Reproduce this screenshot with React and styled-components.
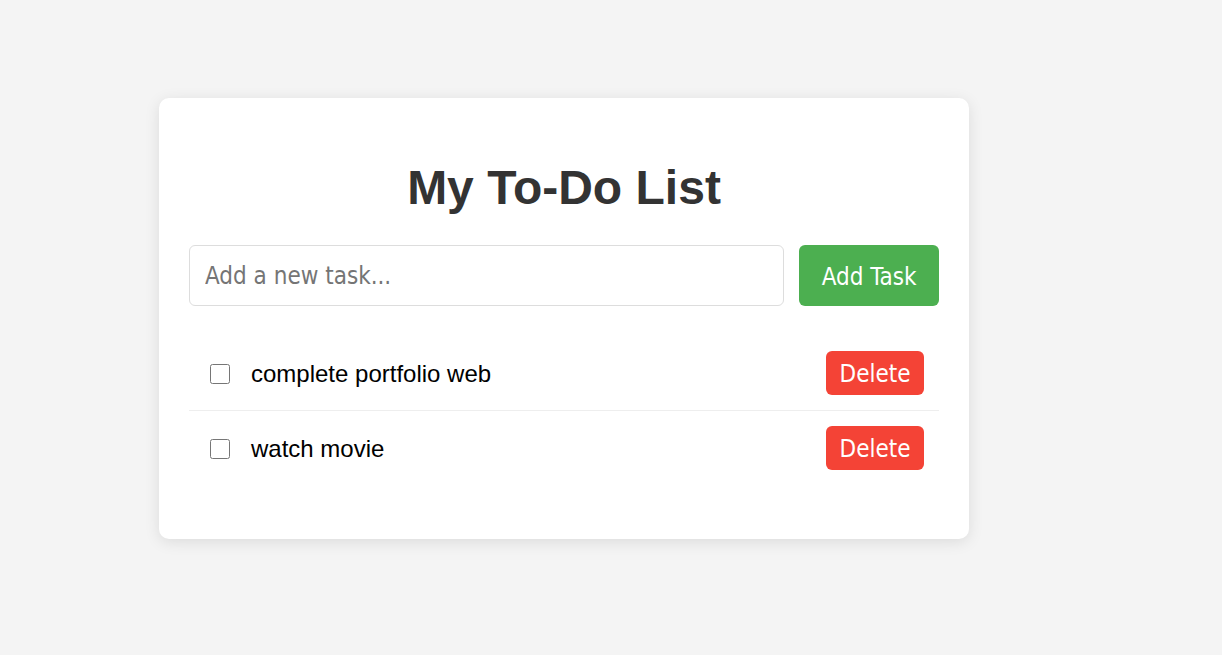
import React, { useState } from "react";
import styled, { createGlobalStyle } from "styled-components";

const Global = createGlobalStyle`
  html, body { margin: 0; padding: 0; background: #f4f4f4; }
  body { font-family: "Liberation Sans", Arial, sans-serif; }
`;

const Page = styled.div`
  padding: 98px 0 0 159px;
  min-height: 655px;
  box-sizing: border-box;
`;

const Card = styled.div`
  width: 810px;
  box-sizing: border-box;
  background: #fff;
  padding: 30px;
  border-radius: 10px;
  box-shadow: 0 3px 15px rgba(0, 0, 0, 0.1);
`;

const Title = styled.h1`
  margin: 32px 0 30px;
  text-align: center;
  color: #333;
  font-family: "Liberation Sans", Arial, sans-serif;
  font-size: 48px;
  font-weight: 700;
  line-height: 55px;
`;

const InputRow = styled.div`
  display: flex;
  gap: 15px;
  margin-bottom: 30px;
`;

const controlFont = `"DejaVu Sans Condensed", "DejaVu Sans", "Noto Sans", sans-serif`;

const TaskInput = styled.input`
  flex: 1;
  min-width: 0;
  box-sizing: border-box;
  padding: 16px 15px 14px;
  font-family: ${controlFont};
  font-stretch: condensed;
  font-size: 24px;
  line-height: 29px;
  border: 1px solid #ddd;
  border-radius: 6px;
  outline: none;
  color: #333;
  &::placeholder { color: #757575; }
`;

const AddButton = styled.button`
  padding: 2px 22.5px 0;
  background: #4caf50;
  color: #fff;
  border: none;
  border-radius: 6px;
  font-family: ${controlFont};
  font-stretch: condensed;
  font-size: 24px;
  cursor: pointer;
`;

const List = styled.ul`
  list-style: none;
  padding: 0;
  margin: 24px 0;
`;

const Item = styled.li`
  display: flex;
  align-items: center;
  padding: 15px;
  border-bottom: 1px solid #eee;
  &:last-child { border-bottom: none; }
`;

const Check = styled.input`
  width: 20px;
  height: 20px;
  margin: 1px 0 0 6px;
`;

const Label = styled.span`
  flex: 1;
  margin-left: 21px;
  padding-top: 2px;
  font-size: 24px;
  color: #000;
  text-decoration: ${(p) => (p.$done ? "line-through" : "none")};
`;

const DeleteButton = styled.button`
  padding: 8.5px 13.5px 6.5px;
  background: #f44336;
  color: #fff;
  border: none;
  border-radius: 6px;
  font-family: ${controlFont};
  font-stretch: condensed;
  font-size: 24px;
  line-height: 29px;
  cursor: pointer;
`;

export default function App() {
  const [tasks, setTasks] = useState([
    { id: 1, text: "complete portfolio web", done: false },
    { id: 2, text: "watch movie", done: false },
  ]);
  const [value, setValue] = useState("");

  const add = () => {
    if (!value.trim()) return;
    setTasks([...tasks, { id: Date.now(), text: value.trim(), done: false }]);
    setValue("");
  };

  return (
    <>
      <Global />
      <Page>
        <Card>
          <Title>My To-Do List</Title>
          <InputRow>
            <TaskInput
              placeholder="Add a new task..."
              value={value}
              onChange={(e) => setValue(e.target.value)}
            />
            <AddButton onClick={add}>Add Task</AddButton>
          </InputRow>
          <List>
            {tasks.map((t) => (
              <Item key={t.id}>
                <Check
                  type="checkbox"
                  checked={t.done}
                  onChange={() =>
                    setTasks(tasks.map((x) => (x.id === t.id ? { ...x, done: !x.done } : x)))
                  }
                />
                <Label $done={t.done}>{t.text}</Label>
                <DeleteButton onClick={() => setTasks(tasks.filter((x) => x.id !== t.id))}>
                  Delete
                </DeleteButton>
              </Item>
            ))}
          </List>
        </Card>
      </Page>
    </>
  );
}
